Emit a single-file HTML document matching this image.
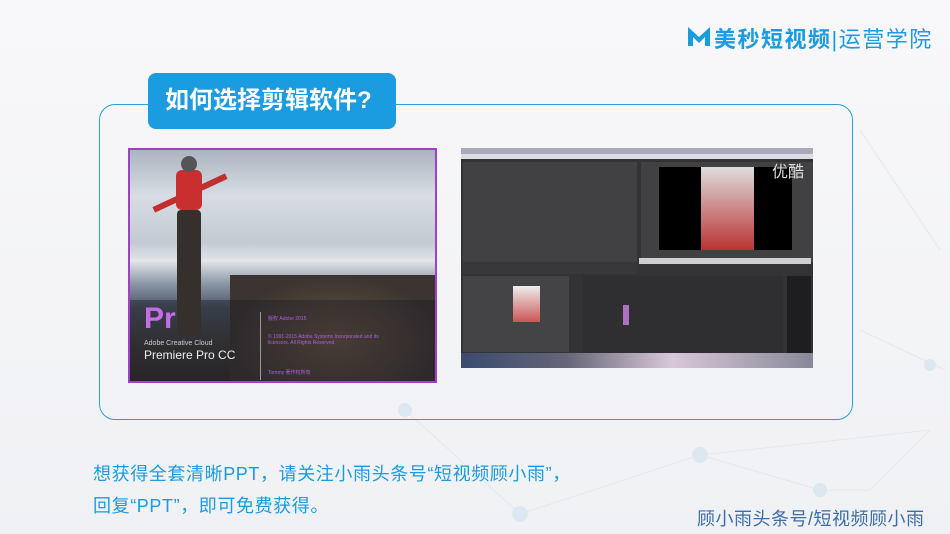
<!DOCTYPE html>
<html><head><meta charset="utf-8"><style>
*{margin:0;padding:0;box-sizing:border-box}
body{width:950px;height:534px;overflow:hidden;background:#f4f5f7;font-family:"Liberation Sans","Noto Sans CJK SC",sans-serif;position:relative}
.abs{position:absolute}
</style></head><body>
<div class="abs" style="left:0;top:0;width:950px;height:534px;background:linear-gradient(180deg,#f8f8fa,#f0f1f4)"></div>
<svg class="abs" style="left:0;top:0" width="950" height="534">
<g stroke="#e3e8ee" stroke-width="1" fill="none">
<line x1="405" y1="410" x2="520" y2="514"/><line x1="520" y1="514" x2="700" y2="455"/><line x1="700" y1="455" x2="820" y2="490"/><line x1="820" y1="490" x2="870" y2="490"/><line x1="870" y1="490" x2="930" y2="430"/><line x1="700" y1="455" x2="930" y2="430"/><line x1="860" y1="130" x2="940" y2="250"/><line x1="860" y1="330" x2="945" y2="370"/>
</g>
<g fill="#dde7f1"><circle cx="405" cy="410" r="7"/><circle cx="520" cy="514" r="8"/><circle cx="700" cy="455" r="8"/><circle cx="820" cy="490" r="7"/><circle cx="930" cy="365" r="6"/></g>
</svg>
<!-- logo -->
<svg class="abs" style="left:686px;top:24px" width="26" height="24"><path d="M2 22 V3 L13 13 L24 3 V22 L19 22 L19 13 L13 19 L7 13 L7 22 Z" fill="#1b9be0"/></svg>
<div class="abs" style="left:714px;top:22px;font-size:22px;color:#1b9be0;font-weight:bold;letter-spacing:1.5px;white-space:nowrap">美秒短视频<span style="font-weight:normal">|运营学院</span></div>
<!-- frame -->
<div class="abs" style="left:99px;top:104px;width:754px;height:316px;border:1px solid #2a9fd8;border-radius:16px"></div>
<div class="abs" style="left:148px;top:73px;width:248px;height:56px;background:#1b9be0;border-radius:8px;color:#fff;font-weight:bold;font-size:24px;line-height:56px;padding-left:17px;white-space:nowrap">如何选择剪辑软件?</div>
<!-- left image -->
<div class="abs" style="left:128px;top:148px;width:309px;height:235px;border:2px solid #a040c8;background:linear-gradient(180deg,#aab4c0 0%,#d8dde3 20%,#c2cad3 40%,#e2e5e9 48%,#8a95a5 58%,#4e5868 68%,#3d3a38 85%,#2e2a28 100%);overflow:hidden">
<div class="abs" style="left:100px;top:125px;width:210px;height:110px;background:radial-gradient(ellipse at 50% 60%,#6a5540,#3b3430 70%)"></div>
<div class="abs" style="left:0;top:150px;width:309px;height:85px;background:rgba(30,30,40,.45)"></div>
<div class="abs" style="left:20px;top:40px;width:80px;height:6px;background:#c03030;transform:rotate(-25deg)"></div>
<div class="abs" style="left:46px;top:20px;width:26px;height:40px;background:#c83030;border-radius:6px"></div>
<div class="abs" style="left:47px;top:60px;width:24px;height:125px;background:#35302c;border-radius:4px"></div>
<div class="abs" style="left:51px;top:6px;width:16px;height:16px;background:#555;border-radius:50%"></div>
<div class="abs" style="left:14px;top:152px;color:#c56ce8;font-size:30px;font-weight:bold">Pr</div>
<div class="abs" style="left:14px;top:190px;color:#ccc;font-size:7px">Adobe Creative Cloud</div>
<div class="abs" style="left:14px;top:198px;color:#eee;font-size:12px">Premiere Pro CC</div>
<div class="abs" style="left:130px;top:162px;width:1px;height:68px;background:#999"></div>
<div class="abs" style="left:138px;top:166px;color:#b05fe0;font-size:5px;line-height:6px;width:120px">版权 Adobe 2015<br><br><br>© 1991-2015 Adobe Systems Incorporated and its licensors. All Rights Reserved.<br><br><br><br><br>Tommy 著作权所有</div>
</div>
<!-- right image -->
<div class="abs" style="left:461px;top:148px;width:352px;height:220px;background:#333336;overflow:hidden">
<div class="abs" style="left:0;top:0;width:352px;height:6px;background:#a9a9b8"></div>
<div class="abs" style="left:0;top:6px;width:352px;height:5px;background:#dcdde2"></div>
<div class="abs" style="left:2px;top:14px;width:174px;height:100px;background:#414144"></div>
<div class="abs" style="left:2px;top:114px;width:174px;height:12px;background:#38383b"></div>
<div class="abs" style="left:180px;top:14px;width:172px;height:100px;background:#414144"></div>
<div class="abs" style="left:198px;top:19px;width:133px;height:83px;background:#000"></div>
<div class="abs" style="left:240px;top:19px;width:53px;height:83px;background:linear-gradient(180deg,#ddd,#c88 50%,#b33)"></div>
<div class="abs" style="left:311px;top:10px;color:#ddd;font-size:16px">优酷</div>
<div class="abs" style="left:178px;top:110px;width:172px;height:6px;background:#cfcfd2"></div>
<div class="abs" style="left:2px;top:128px;width:106px;height:76px;background:#444447"></div>
<div class="abs" style="left:52px;top:138px;width:27px;height:36px;background:linear-gradient(#eee,#c55)"></div>
<div class="abs" style="left:122px;top:128px;width:200px;height:78px;background:#2f2f31"></div>
<div class="abs" style="left:326px;top:128px;width:24px;height:78px;background:#1e1e20"></div>
<div class="abs" style="left:162px;top:157px;width:6px;height:20px;background:#b070c0"></div>
<div class="abs" style="left:0;top:205px;width:352px;height:15px;background:linear-gradient(90deg,#3a4a70,#667,#d8c8d8 60%,#889)"></div>
</div>
<!-- bottom text -->
<div class="abs" style="left:93px;top:458px;color:#1b9be0;font-size:18px;line-height:32px;white-space:nowrap;letter-spacing:0.6px">想获得全套清晰PPT，请关注小雨头条号“短视频顾小雨”，<br>回复“PPT”，即可免费获得。</div>
<div class="abs" style="left:697px;top:505px;color:#3d6ea5;font-size:18px;white-space:nowrap;letter-spacing:0.5px">顾小雨头条号/短视频顾小雨</div>
</body></html>
